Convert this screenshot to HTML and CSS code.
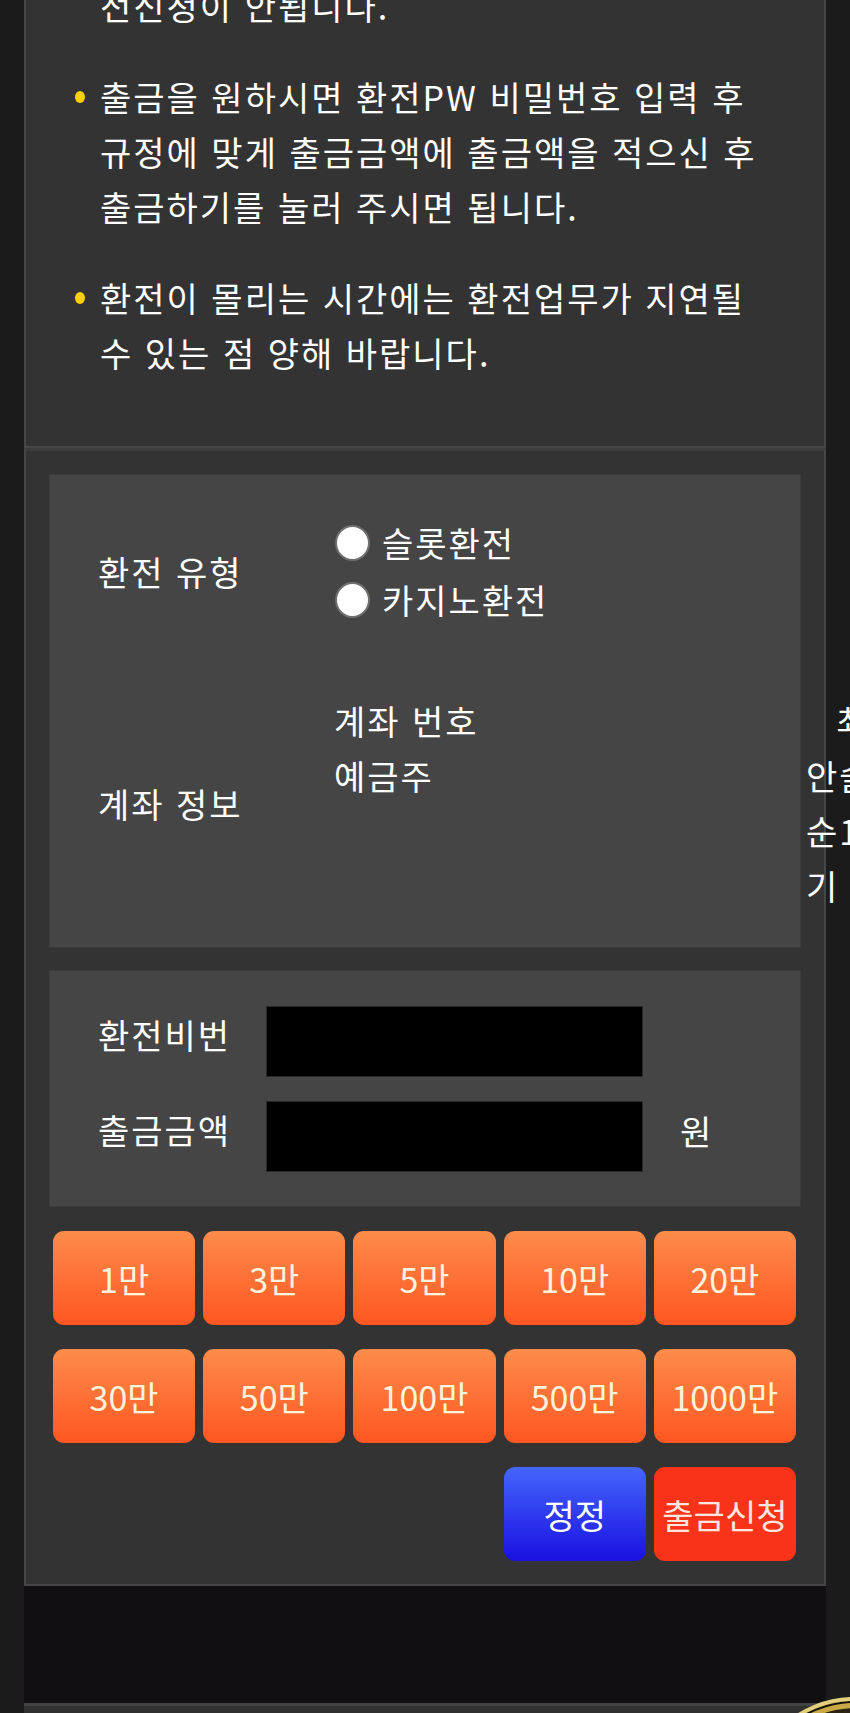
FILE: index.html
```html
<!DOCTYPE html>
<html lang="ko">
<head>
<meta charset="utf-8">
<title>출금신청</title>
<link rel="stylesheet" href="styles.css">
</head>
<body>
<div class="page">
  <section class="notes">
    <ul class="note-list">
      <li>출금 처리중에는 중복으로 환<br>전신청이 안됩니다.</li>
      <li>출금을 원하시면 환전PW 비밀번호 입력 후 규정에 맞게 출금금액에 출금액을 적으신 후 출금하기를 눌러 주시면 됩니다.</li>
      <li>환전이 몰리는 시간에는 환전업무가 지연될<br>수 있는 점 양해 바랍니다.</li>
    </ul>
  </section>

  <section class="withdraw">
    <div class="box info">
      <div class="label">환전 유형</div>
      <div class="radios">
        <label class="radio"><input type="radio" name="type"><span>슬롯환전</span></label>
        <label class="radio"><input type="radio" name="type"><span>카지노환전</span></label>
      </div>
      <div class="extra"></div>

      <div class="label">계좌 정보</div>
      <div class="acct">
        <div>계좌 번호</div>
        <div>예금주</div>
      </div>
      <div class="extra overflow">최대 출금 안내<br>안슬롯 출금 시 유의<br>순1회 출금 가능<br>기</div>
    </div>

    <div class="box pw">
      <div class="label">환전비번</div>
      <input class="field" type="password">
      <div class="unit"></div>
      <div class="label">출금금액</div>
      <input class="field" type="text">
      <div class="unit">원</div>
    </div>

    <div class="amounts">
      <button class="btn amt">1만</button>
      <button class="btn amt">3만</button>
      <button class="btn amt">5만</button>
      <button class="btn amt">10만</button>
      <button class="btn amt">20만</button>
      <button class="btn amt">30만</button>
      <button class="btn amt">50만</button>
      <button class="btn amt">100만</button>
      <button class="btn amt">500만</button>
      <button class="btn amt">1000만</button>
      <button class="btn reset">정정</button>
      <button class="btn submit">출금신청</button>
    </div>
  </section>

  <div class="gap-area"></div>
  <div class="next-panel"></div>
</div>
<div class="coin"></div>
</body>
</html>
```

FILE: styles.css
```css
html, body {
  margin: 0;
  padding: 0;
  background: #1b1b1b;
  overflow: hidden;
}

body {
  font-family: "Noto Sans CJK KR", "Noto Sans", sans-serif;
  font-size: 34px;
  letter-spacing: 2px;
  word-break: keep-all;
  color: #ffffff;
  position: relative;
  min-height: 1713px;
}

.page {
  margin: 0 24px;
}

/* notes */
.notes {
  margin-top: -77px;
  background: #333333;
  border: 2px solid #474747;
  border-top: none;
  padding: 0 20px 66px 74px;
}

.note-list {
  list-style: none;
  margin: 0;
  padding: 0;
  line-height: 55px;
}

.note-list li {
  position: relative;
}

.note-list li + li {
  margin-top: 36px;
}

.note-list li::before {
  content: "";
  position: absolute;
  left: -25px;
  top: 22px;
  width: 10px;
  height: 12px;
  border-radius: 50%;
  background: #ffd000;
}

/* withdraw panel */
.withdraw {
  background: #333333;
  border: 2px solid #474747;
  border-top: 3px solid #3d3d3d;
  padding: 24px 24px 23px;
}

.box {
  background: #454545;
  box-shadow: 0 0 0 1px #3b3b3b;
}

.info {
  display: grid;
  grid-template-columns: 236px 472px max-content;
  row-gap: 65px;
  padding: 39px 0 34px 48px;
}

.label {
  align-self: center;
  white-space: nowrap;
}

.radios {
  display: flex;
  flex-direction: column;
}

.radio {
  display: flex;
  align-items: center;
  height: 57px;
  gap: 12px;
}

.radio input {
  appearance: none;
  -webkit-appearance: none;
  margin: 0 0 0 1px;
  width: 35px;
  height: 36px;
  border-radius: 50%;
  background: #ffffff;
  border: 2px solid #6f6f6f;
  box-sizing: border-box;
}

.acct {
  line-height: 55px;
  white-space: nowrap;
}

.extra {
  line-height: 55px;
  white-space: nowrap;
}

.overflow {
  text-indent: 30px;
}

.pw {
  margin-top: 24px;
  display: grid;
  grid-template-columns: 168px 377px max-content;
  row-gap: 24px;
  align-items: start;
  padding: 35px 0 34px 48px;
}

.pw .label {
  align-self: start;
  line-height: 58px;
}

.field {
  width: 377px;
  height: 71px;
  box-sizing: border-box;
  margin: 0;
  background: #000000;
  border: 1px solid #2a2a2a;
  color: #ffffff;
  font: inherit;
}

.unit {
  margin-left: 37px;
  line-height: 60px;
}

/* buttons */
.amounts {
  margin-top: 25px;
  padding: 0 4px 0 3px;
  display: grid;
  grid-template-columns: repeat(5, 1fr);
  gap: 24px 8px;
}

.btn {
  height: 94px;
  border: none;
  border-radius: 11px;
  font-family: inherit;
  font-size: 34px;
  letter-spacing: 0;
  padding: 0;
  white-space: nowrap;
}

.amt {
  background: linear-gradient(to bottom, #fd8c4a, #ff5621);
  color: #fff3dd;
}

.reset {
  grid-column: 4;
  background: linear-gradient(to bottom, #4466fb, #1a10e2);
  color: #ffffff;
}

.submit {
  grid-column: 5;
  background: #f9321a;
  color: #ffe6de;
}

.gap-area {
  height: 117px;
  background: #110f11;
}

.next-panel {
  height: 60px;
  background: #303030;
  border-top: 3px solid #444444;
}

.coin {
  position: absolute;
  left: 745px;
  top: 1697px;
  width: 220px;
  height: 220px;
  border-radius: 50%;
  box-sizing: border-box;
  border: 4px solid #e3d07c;
  background: #2a2312;
  box-shadow: inset 0 0 0 2px #141108, inset 0 0 0 7px #c9a846;
}
```
